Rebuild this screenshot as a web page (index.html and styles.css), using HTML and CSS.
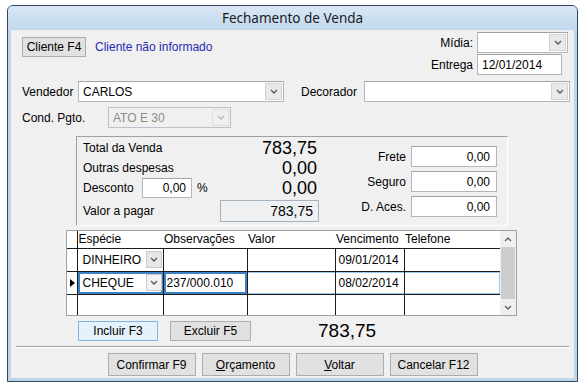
FILE: index.html
```html
<!DOCTYPE html>
<html lang="pt">
<head>
<meta charset="utf-8">
<title>Fechamento de Venda</title>
<link rel="stylesheet" href="styles.css">
</head>
<body>
<div class="window">
  <div class="titlebar">Fechamento de Venda</div>
  <div class="content">
    <div class="top-row">
      <div class="cliente">
        <button class="btn btn-cliente">Cliente F4</button>
        <span class="cliente-info">Cliente não informado</span>
      </div>
      <div class="midia-grid">
        <span class="lbl-right">Mídia:</span>
        <div class="combo combo-midia"><span class="combo-text"></span><span class="dd"><svg width="8" height="5" viewBox="0 0 8 5"><polyline points="1,1 4,4 7,1" fill="none" stroke="#555" stroke-width="1.3"/></svg></span></div>
        <span class="lbl-right">Entrega</span>
        <div class="input input-entrega">12/01/2014</div>
      </div>
    </div>

    <div class="field-row vend-row">
      <span class="lbl lbl-vend">Vendedor</span>
      <div class="combo combo-wide"><span class="combo-text">CARLOS</span><span class="dd"><svg width="8" height="5" viewBox="0 0 8 5"><polyline points="1,1 4,4 7,1" fill="none" stroke="#555" stroke-width="1.3"/></svg></span></div>
      <span class="lbl lbl-deco">Decorador</span>
      <div class="combo combo-deco"><span class="combo-text"></span><span class="dd"><svg width="8" height="5" viewBox="0 0 8 5"><polyline points="1,1 4,4 7,1" fill="none" stroke="#555" stroke-width="1.3"/></svg></span></div>
    </div>

    <div class="field-row cond-row">
      <span class="lbl lbl-cond">Cond. Pgto.</span>
      <div class="combo combo-cond disabled"><span class="combo-text">ATO E 30</span><span class="dd"><svg width="8" height="5" viewBox="0 0 8 5"><polyline points="1,1 4,4 7,1" fill="none" stroke="#b8b8b8" stroke-width="1.3"/></svg></span></div>
    </div>

    <div class="totals">
      <div class="totals-left">
        <div class="t-row"><span class="t-lbl">Total da Venda</span><span class="big">783,75</span></div>
        <div class="t-row"><span class="t-lbl">Outras despesas</span><span class="big">0,00</span></div>
        <div class="t-row"><span class="t-lbl t-desc">Desconto</span><div class="input input-desc">0,00</div><span class="pct">%</span><span class="big">0,00</span></div>
        <div class="t-row t-row-pagar"><span class="t-lbl">Valor a pagar</span><div class="pagar">783,75</div></div>
      </div>
      <div class="totals-right">
        <span class="lbl-right">Frete</span><div class="input input-num">0,00</div>
        <span class="lbl-right">Seguro</span><div class="input input-num">0,00</div>
        <span class="lbl-right">D. Aces.</span><div class="input input-num">0,00</div>
      </div>
    </div>

    <div class="grid">
      <table class="tbl">
        <colgroup><col class="c-ind"><col class="c-esp"><col class="c-obs"><col class="c-val"><col class="c-ven"><col class="c-tel"></colgroup>
        <thead>
          <tr><th class="ind"></th><th>Espécie</th><th>Observações</th><th>Valor</th><th>Vencimento</th><th>Telefone</th></tr>
        </thead>
        <tbody>
          <tr>
            <td class="ind"></td>
            <td><div class="cell-combo"><span>DINHEIRO</span><span class="cell-dd"><svg width="8" height="5" viewBox="0 0 8 5"><polyline points="1,1 4,4 7,1" fill="none" stroke="#555" stroke-width="1.3"/></svg></span></div></td>
            <td></td><td></td><td>09/01/2014</td><td></td>
          </tr>
          <tr class="sel">
            <td class="ind"><span class="tri"></span></td>
            <td class="sel-strong"><div class="cell-combo"><span>CHEQUE</span><span class="cell-dd light"><svg width="8" height="5" viewBox="0 0 8 5"><polyline points="1,1 4,4 7,1" fill="none" stroke="#555" stroke-width="1.3"/></svg></span></div></td>
            <td class="sel-strong">237/000.010</td><td class="sel-light"></td><td class="sel-light">08/02/2014</td><td class="sel-light sel-end"></td>
          </tr>
          <tr class="last">
            <td class="ind"></td><td></td><td></td><td></td><td></td><td></td>
          </tr>
        </tbody>
      </table>
      <div class="scrollbar">
        <div class="sb-btn"><svg width="8" height="5" viewBox="0 0 8 5"><polyline points="1,4 4,1 7,4" fill="none" stroke="#606060" stroke-width="1.3"/></svg></div>
        <div class="sb-track"><div class="sb-thumb"></div></div>
        <div class="sb-btn"><svg width="8" height="5" viewBox="0 0 8 5"><polyline points="1,1 4,4 7,1" fill="none" stroke="#606060" stroke-width="1.3"/></svg></div>
      </div>
    </div>

    <div class="grid-actions">
      <button class="btn btn-incluir focused">Incluir F3</button>
      <button class="btn btn-excluir">Excluir F5</button>
      <span class="total-grid">783,75</span>
    </div>

    <div class="separator"></div>

    <div class="footer">
      <button class="btn btn-foot">Confirmar F9</button>
      <button class="btn btn-foot"><u>O</u>rçamento</button>
      <button class="btn btn-foot"><u>V</u>oltar</button>
      <button class="btn btn-foot">Cancelar F12</button>
    </div>
  </div>
</div>
</body>
</html>
```
FILE: styles.css
```css
* { box-sizing: border-box; }
html, body { margin: 0; padding: 0; background: #ffffff; }
body {
  font-family: "Liberation Sans", Arial, sans-serif;
  font-size: 12px;
  color: #000;
}

.window {
  margin: 5px 0 0 7px;
  width: 571px;
  height: 377px;
  border: 1px solid #34475a;
  border-radius: 6px 6px 0 0;
  background: #bcd5ec;
  padding: 0 3px 3px 3px;
  display: flex;
  flex-direction: column;
}

.titlebar {
  height: 24px;
  flex: 0 0 24px;
  display: flex;
  align-items: center;
  justify-content: center;
  font-family: "Noto Sans", "Open Sans", sans-serif;
  font-size: 13.5px;
  color: #1b1b1b;
  background: linear-gradient(#d9e7f4, #c2d8ee);
  margin: 0 -3px;
  border-radius: 5px 5px 0 0;
}

.content {
  flex: 1;
  background: #f0f0f0;
  display: flex;
  flex-direction: column;
}

/* generic controls */
.btn {
  font-family: "Liberation Sans", Arial, sans-serif;
  font-size: 12px;
  color: #000;
  background: #e1e1e1;
  border: 1px solid #adadad;
  border-radius: 0;
  padding: 0;
  margin: 0;
}
.btn.focused {
  background: #e5f1fb;
  border-color: #7eb4ea;
}

.input {
  height: 21px;
  background: #fff;
  border: 1px solid #b3b7bd;
  border-top-color: #9ea3a9;
  display: flex;
  align-items: center;
  padding: 0 4px;
  font-size: 12px;
}

.combo {
  height: 21px;
  background: #fff;
  border: 1px solid #b3b7bd;
  border-top-color: #9ea3a9;
  display: flex;
  align-items: center;
  padding: 0 1px 0 4px;
}
.combo-text { flex: 1; }
.dd {
  width: 17px;
  height: 17px;
  background: #e9e9e9;
  border: 1px solid #d2d2d2;
  display: flex;
  align-items: center;
  justify-content: center;
}
.combo.disabled {
  background: #f0f0f0;
  border-color: #b9c3cd;
  color: #8a8a8a;
}
.combo.disabled .dd { background: #f0f0f0; border-color: #e0e0e0; }

.lbl-right { text-align: right; }

/* top row */
.top-row {
  display: flex;
  justify-content: space-between;
  margin-top: 2px;
  padding: 0 6px 0 11px;
}
.cliente {
  display: flex;
  align-items: center;
  margin-top: 5px;
  align-self: flex-start;
}
.btn-cliente { width: 64px; height: 20px; }
.cliente-info { margin-left: 9px; color: #2a2ab4; }

.midia-grid {
  display: grid;
  grid-template-columns: auto 91px;
  column-gap: 4px;
  row-gap: 1px;
  align-items: center;
}
.combo-midia { width: 91px; }
.input-entrega { width: 85px; height: 21px; }

/* field rows */
.field-row {
  display: flex;
  align-items: center;
  padding-left: 11px;
}
.vend-row { margin-top: 6px; }
.cond-row { margin-top: 5px; }
.lbl-vend { width: 56px; }
.combo-wide { width: 206px; }
.lbl-deco { width: 63px; margin-left: 17px; }
.combo-deco { width: 206px; }
.lbl-cond { width: 86px; }
.combo-cond { width: 123px; }

/* totals */
.totals {
  margin: 8px 0 0 65px;
  width: 432px;
  height: 90px;
  border: 1px solid #a0a0a0;
  border-right-color: #fff;
  border-bottom-color: #fff;
  display: flex;
  justify-content: space-between;
  padding: 1px 10px 0 6px;
}
.totals-left { width: 236px; display: flex; flex-direction: column; }
.t-row { display: flex; align-items: center; height: 20px; }
.t-row-pagar { height: 23px; margin-top: 1px; }
.t-lbl { flex: 0 0 auto; }
.t-desc { width: 59px; }
.big {
  margin-left: auto;
  font-size: 18px;
  line-height: 18px;
  padding-right: 2px;
}
.input-desc {
  width: 50px;
  height: 20px;
  justify-content: flex-end;
  padding-right: 5px;
}
.pct { margin-left: 5px; }
.pagar {
  margin-left: auto;
  width: 99px;
  height: 22px;
  background: #eef0f2;
  border: 1px solid #a7b2bd;
  display: flex;
  align-items: center;
  justify-content: flex-end;
  padding-right: 5px;
  font-size: 14px;
}

.totals-right {
  margin-top: 8px;
  display: grid;
  grid-template-columns: auto 86px;
  column-gap: 5px;
  row-gap: 4px;
  align-items: center;
  align-self: flex-start;
}
.input-num { justify-content: flex-end; padding-right: 6px; }

/* grid */
.grid {
  margin: 4px 0 0 55px;
  width: 451px;
  height: 86px;
  border: 1px solid #a0a0a0;
  background: #fff;
  display: flex;
}
.tbl {
  width: 433px;
  table-layout: fixed;
  border-collapse: collapse;
  font-size: 12px;
  align-self: flex-start;
}
.c-ind { width: 10px; }
.c-esp { width: 86px; }
.c-obs { width: 84px; }
.c-val { width: 88px; }
.c-ven { width: 69px; }
.c-tel { width: 96px; }
.tbl th {
  height: 17px;
  text-align: left;
  font-weight: normal;
  padding: 0 0 0 1px;
  border-bottom: 1px solid #1a1a1a;
  white-space: nowrap;
  overflow: hidden;
}
.tbl th.ind { border-right: 1px solid #1a1a1a; }
.tbl td {
  height: 23px;
  border: 1px solid #1a1a1a;
  padding: 0 0 0 3px;
  white-space: nowrap;
}
.tbl td.ind { border-left: none; padding: 0; position: relative; }
.tbl tr.last td { height: 21px; border-bottom: none; }
.tbl td:last-child { border-right: none; }

.cell-combo {
  display: flex;
  align-items: center;
  justify-content: space-between;
  padding-left: 2px;
  padding-right: 0;
  margin-right: 1px;
}
.cell-dd {
  width: 16px;
  height: 17px;
  background: #e6e6e6;
  border: 1px solid #c9c9c9;
  display: flex;
  align-items: center;
  justify-content: center;
}
.cell-dd.light { background: #f2f2f2; }

.tri {
  display: block;
  width: 0;
  height: 0;
  border-top: 4px solid transparent;
  border-bottom: 4px solid transparent;
  border-left: 5px solid #000;
  margin-left: 3px;
}
.sel-strong { box-shadow: inset 0 0 0 2px #3f82c4; }
.sel-light { box-shadow: inset 0 1px 0 #9cc8ea, inset 0 -1px 0 #9cc8ea; }
.sel-end { box-shadow: inset 0 1px 0 #9cc8ea, inset 0 -1px 0 #9cc8ea, inset -1px 0 0 #9cc8ea; }

.scrollbar {
  width: 17px;
  margin-left: auto;
  display: flex;
  flex-direction: column;
  background: #f0f0f0;
}
.sb-btn {
  height: 16px;
  display: flex;
  align-items: center;
  justify-content: center;
  background: #f0f0f0;
}
.sb-track { flex: 1; padding: 0 1px; }
.sb-thumb { height: 100%; background: #cdcdcd; }

/* grid actions */
.grid-actions {
  display: flex;
  align-items: center;
  margin-top: 5px;
  padding-left: 67px;
}
.btn-incluir { width: 80px; height: 20px; }
.btn-excluir { width: 81px; height: 20px; margin-left: 12px; }
.total-grid { margin-left: 67px; font-size: 19px; line-height: 20px; }

.separator {
  margin: 5px 5px 0 5px;
  height: 2px;
  border-top: 1px solid #a0a0a0;
  border-bottom: 1px solid #ffffff;
}

.footer {
  display: flex;
  justify-content: center;
  gap: 6px;
  margin-top: 5px;
}
.btn-foot { width: 88px; height: 23px; }
.btn u { text-decoration: underline; }
```
